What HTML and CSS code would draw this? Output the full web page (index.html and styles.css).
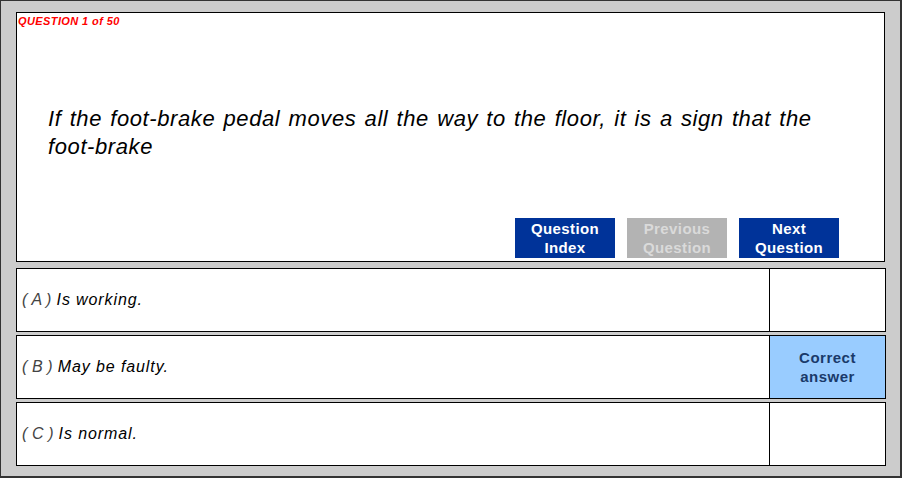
FILE: index.html
```html
<!DOCTYPE html>
<html lang="en">
<head>
    <meta charset="UTF-8">
    <title>Question 1 of 50</title>
    <link rel="stylesheet" href="styles.css">
</head>
<body>
    <div class="frame">
        <div class="question-panel">
            <div class="question-number">QUESTION 1 of 50</div>
            <p class="question-text">If the foot-brake pedal moves all the way to the floor, it is a sign that the foot-brake</p>
            <div class="button-row">
                <button class="nav-btn">Question<br>Index</button>
                <button class="nav-btn disabled">Previous<br>Question</button>
                <button class="nav-btn">Next<br>Question</button>
            </div>
        </div>

        <div class="answer">
            <div class="answer-text"><span class="letter">( A )</span> Is working.</div>
            <div class="answer-mark"></div>
        </div>
        <div class="answer">
            <div class="answer-text"><span class="letter">( B )</span> May be faulty.</div>
            <div class="answer-mark correct">Correct<br>answer</div>
        </div>
        <div class="answer">
            <div class="answer-text"><span class="letter">( C )</span> Is normal.</div>
            <div class="answer-mark"></div>
        </div>
    </div>
</body>
</html>
```

FILE: styles.css
```css
body {
    margin: 0;
    font-family: "Liberation Sans", Arial, sans-serif;
}

.frame {
    box-sizing: border-box;
    width: 902px;
    height: 478px;
    background: #cccccc;
    border: 1px solid #333;
    border-right-width: 2px;
    border-bottom-width: 2px;
    padding: 11px 15px 0 15px;
    display: flex;
    flex-direction: column;
    gap: 3px;
}

.question-panel {
    box-sizing: border-box;
    width: 869px;
    height: 250px;
    background: #fff;
    border: 1px solid #000;
    margin-bottom: 3px;
    display: flex;
    flex-direction: column;
}

.question-number {
    color: #ff0000;
    font-size: 11px;
    font-weight: bold;
    font-style: italic;
    letter-spacing: 0.4px;
    padding: 2px 0 0 1px;
    line-height: 12px;
}

.question-text {
    margin: 0;
    padding: 78px 40px 0 31px;
    font-size: 22px;
    font-style: italic;
    letter-spacing: 0.6px;
    word-spacing: 1.5px;
    line-height: 28px;
    color: #000;
    flex: 1;
}

.button-row {
    display: flex;
    justify-content: flex-end;
    gap: 12px;
    padding: 0 45px 3px 0;
}

.nav-btn {
    width: 100px;
    height: 40px;
    border: none;
    padding: 0;
    background: #003399;
    color: #fff;
    font-family: "Liberation Sans", Arial, sans-serif;
    font-size: 15px;
    font-weight: bold;
    letter-spacing: 0.4px;
    line-height: 19px;
}

.nav-btn.disabled {
    background: #b3b3b3;
    color: #dadada;
}

.answer {
    box-sizing: border-box;
    width: 870px;
    height: 64px;
    background: #fff;
    border: 1px solid #000;
    display: flex;
}

.answer-text {
    flex: 1;
    display: flex;
    align-items: center;
    gap: 5px;
    padding-left: 5px;
    font-size: 16px;
    font-style: italic;
    letter-spacing: 0.9px;
    color: #000;
}

.letter {
    color: #444;
    letter-spacing: 0.1px;
}

.answer-mark {
    width: 115px;
    border-left: 1px solid #000;
    display: flex;
    align-items: center;
    justify-content: center;
    text-align: center;
    font-size: 15px;
    font-weight: bold;
    letter-spacing: 0.5px;
    line-height: 19px;
    color: #1a3a6a;
}

.answer-mark.correct {
    background: #99ccff;
}
```
